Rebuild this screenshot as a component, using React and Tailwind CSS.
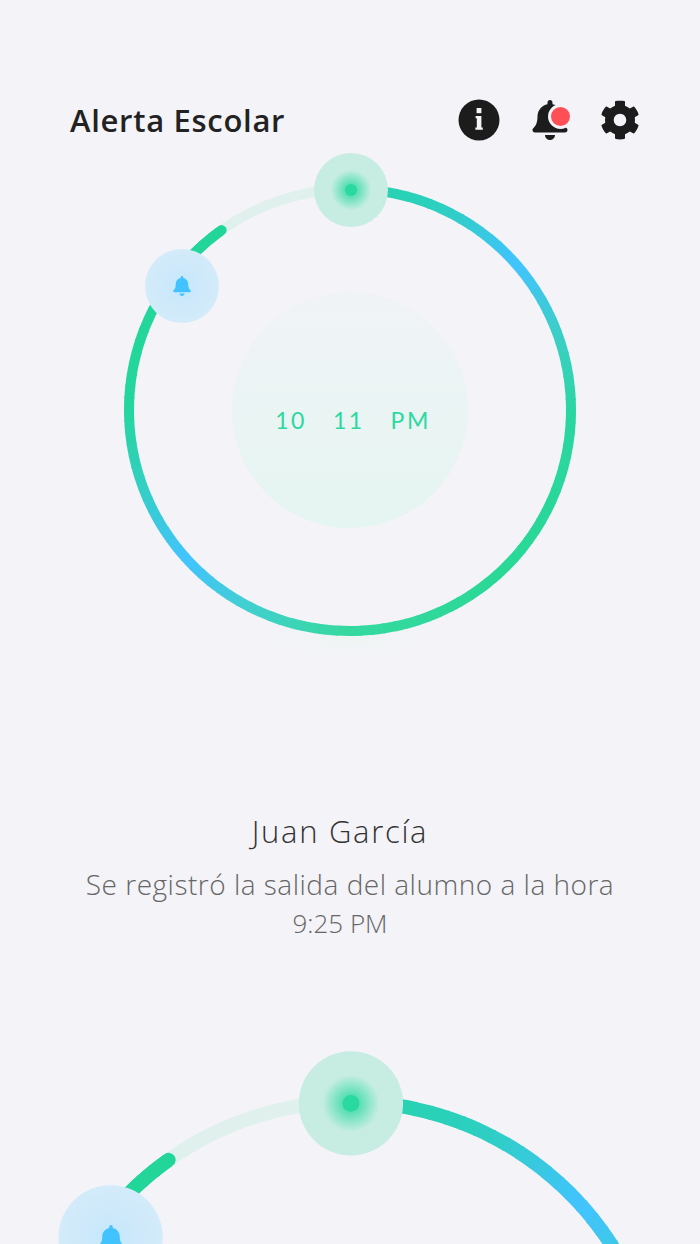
import { FaBell, FaCog } from 'react-icons/fa';

const stops = [
  [0, [36, 211, 170]],
  [25, [46, 207, 195]],
  [47, [66, 195, 255]],
  [68, [60, 206, 200]],
  [90, [42, 214, 160]],
  [135, [42, 216, 150]],
  [180, [53, 217, 160]],
  [205, [66, 208, 205]],
  [226, [66, 195, 255]],
  [250, [50, 208, 190]],
  [272, [36, 214, 155]],
  [360, [30, 214, 150]],
];

function colorAt(angle) {
  for (let i = 0; i < stops.length - 1; i++) {
    const [a, c1] = stops[i];
    const [b, c2] = stops[i + 1];
    if (angle >= a && angle <= b) {
      const t = (angle - a) / (b - a);
      const mix = c1.map((v, n) => Math.round(v + (c2[n] - v) * t));
      return `rgb(${mix.join(',')})`;
    }
  }
  return 'rgb(30,214,150)';
}

function point(angle) {
  const rad = (angle * Math.PI) / 180;
  return [260 + 221 * Math.sin(rad), 260 - 221 * Math.cos(rad)];
}

function arc(from, to) {
  const [x1, y1] = point(from);
  const [x2, y2] = point(to);
  return `M${x1} ${y1}A221 221 0 ${to - from > 180 ? 1 : 0} 1 ${x2} ${y2}`;
}

const segments = [];
for (let a = 0; a < 324; a += 3) segments.push(a);

function InfoIcon() {
  return (
    <svg viewBox="0 0 42 42" className="w-[42px] h-[42px]">
      <circle cx="21" cy="21" r="20.5" fill="#1c1c1c" />
      <rect x="18.6" y="9" width="4.8" height="5.2" fill="#f3f3f8" />
      <path d="M17.6 17h5.8v11.5h1.4v2.2h-7.4v-2.2h1.4v-9.3h-1.2z" fill="#f3f3f8" />
    </svg>
  );
}

function Dial({ id, className, bellX, bellY }) {
  return (
    <svg viewBox="0 0 520 520" className={className}>
      <defs>
        <radialGradient id={`${id}-green`}>
          <stop offset="0" stopColor="#2ad9a0" />
          <stop offset="0.55" stopColor="#c7ede2" />
          <stop offset="1" stopColor="#c7ede2" />
        </radialGradient>
        <radialGradient id={`${id}-blue`}>
          <stop offset="0" stopColor="#c4e8fc" />
          <stop offset="0.6" stopColor="#cfe9fa" />
          <stop offset="1" stopColor="#d3ebfa" />
        </radialGradient>
        <radialGradient id={`${id}-glow`}>
          <stop offset="0" stopColor="#eef5f2" />
          <stop offset="1" stopColor="#f3f3f8" stopOpacity="0" />
        </radialGradient>
      </defs>
      <ellipse cx="260" cy="490" rx="100" ry="22" fill={`url(#${id}-glow)`} />
      <path d={arc(324, 360)} fill="none" stroke="#e0f1ed" strokeWidth="10" />
      {segments.map((a) => (
        <path key={a} d={arc(a, a + 3.4)} fill="none" stroke={colorAt(a)} strokeWidth="10" />
      ))}
      <path d={arc(305, 324.5)} fill="none" stroke="#22d69a" strokeWidth="10" strokeLinecap="round" />
      <circle cx="261" cy="40" r="37" fill={`url(#${id}-green)`} />
      <circle cx="261" cy="40" r="6" fill="#2ad9a0" />
      <circle cx={bellX} cy={bellY} r="37" fill={`url(#${id}-blue)`} />
    </svg>
  );
}

export default function App() {
  return (
    <div className="w-[700px] h-[1244px] overflow-hidden bg-[#f3f3f8] font-['Lato',sans-serif]">
      <header className="flex items-center justify-between pt-[100px] pl-[70px] pr-[60px] h-[140px]">
        <h1 className="font-['Open_Sans',sans-serif] text-[31px] font-semibold text-[#222222] tracking-[0.7px]">Alerta Escolar</h1>
        <div className="flex items-center gap-[30px]">
          <InfoIcon />
          <div className="relative w-[40px] h-[40px] flex items-center justify-center">
            <FaBell className="w-[36px] h-[40px] text-[#1c1c1c]" />
            <span className="absolute top-[7px] right-[0px] w-[19px] h-[19px] rounded-full bg-[#ff4f56] border-[3px] border-[#f3f3f8] box-content -m-[3px]" />
          </div>
          <FaCog className="w-[40px] h-[40px] text-[#1c1c1c]" />
        </div>
      </header>

      <section className="relative w-[520px] h-[520px] ml-[90px] mt-[10px]">
        <Dial id="top" className="w-[520px] h-[520px]" bellX={92} bellY={136} />
        <FaBell className="absolute left-[83px] top-[126px] w-[18px] h-[20px] text-[#42c3ff]" />
        <div className="absolute left-[142px] top-[142px] w-[236px] h-[236px] rounded-full bg-gradient-to-b from-[#f0f3f6] to-[#e5f5f1] flex items-center justify-center gap-[26px] pt-[20px] pl-[6px] text-[23px] tracking-[2.5px] text-[#2ad9a0]">
          <span>10</span>
          <span>11</span>
          <span>PM</span>
        </div>
      </section>

      <section className="mt-[143px] pl-[40px] pr-[60px] text-center font-['Open_Sans',sans-serif]">
        <h2 className="text-[31px] font-light leading-[36px] tracking-[1.7px] text-[#333333]">Juan García</h2>
        <p className="mt-[16px] font-light leading-[39px] text-[#666666]">
          <span className="block pl-[20px] text-[28px] tracking-[0.5px]">Se registró la salida del alumno a la hora</span>
          <span className="block text-[26px]">9:25 PM</span>
        </p>
      </section>

      <section className="relative w-[733px] h-[733px] ml-[-17px] mt-[104px]">
        <Dial id="bottom" className="w-[733px] h-[733px]" bellX={90.5} bellY={135} />
        <FaBell className="absolute left-[115px] top-[178px] w-[26px] h-[28px] text-[#42c3ff]" />
      </section>
    </div>
  );
}
